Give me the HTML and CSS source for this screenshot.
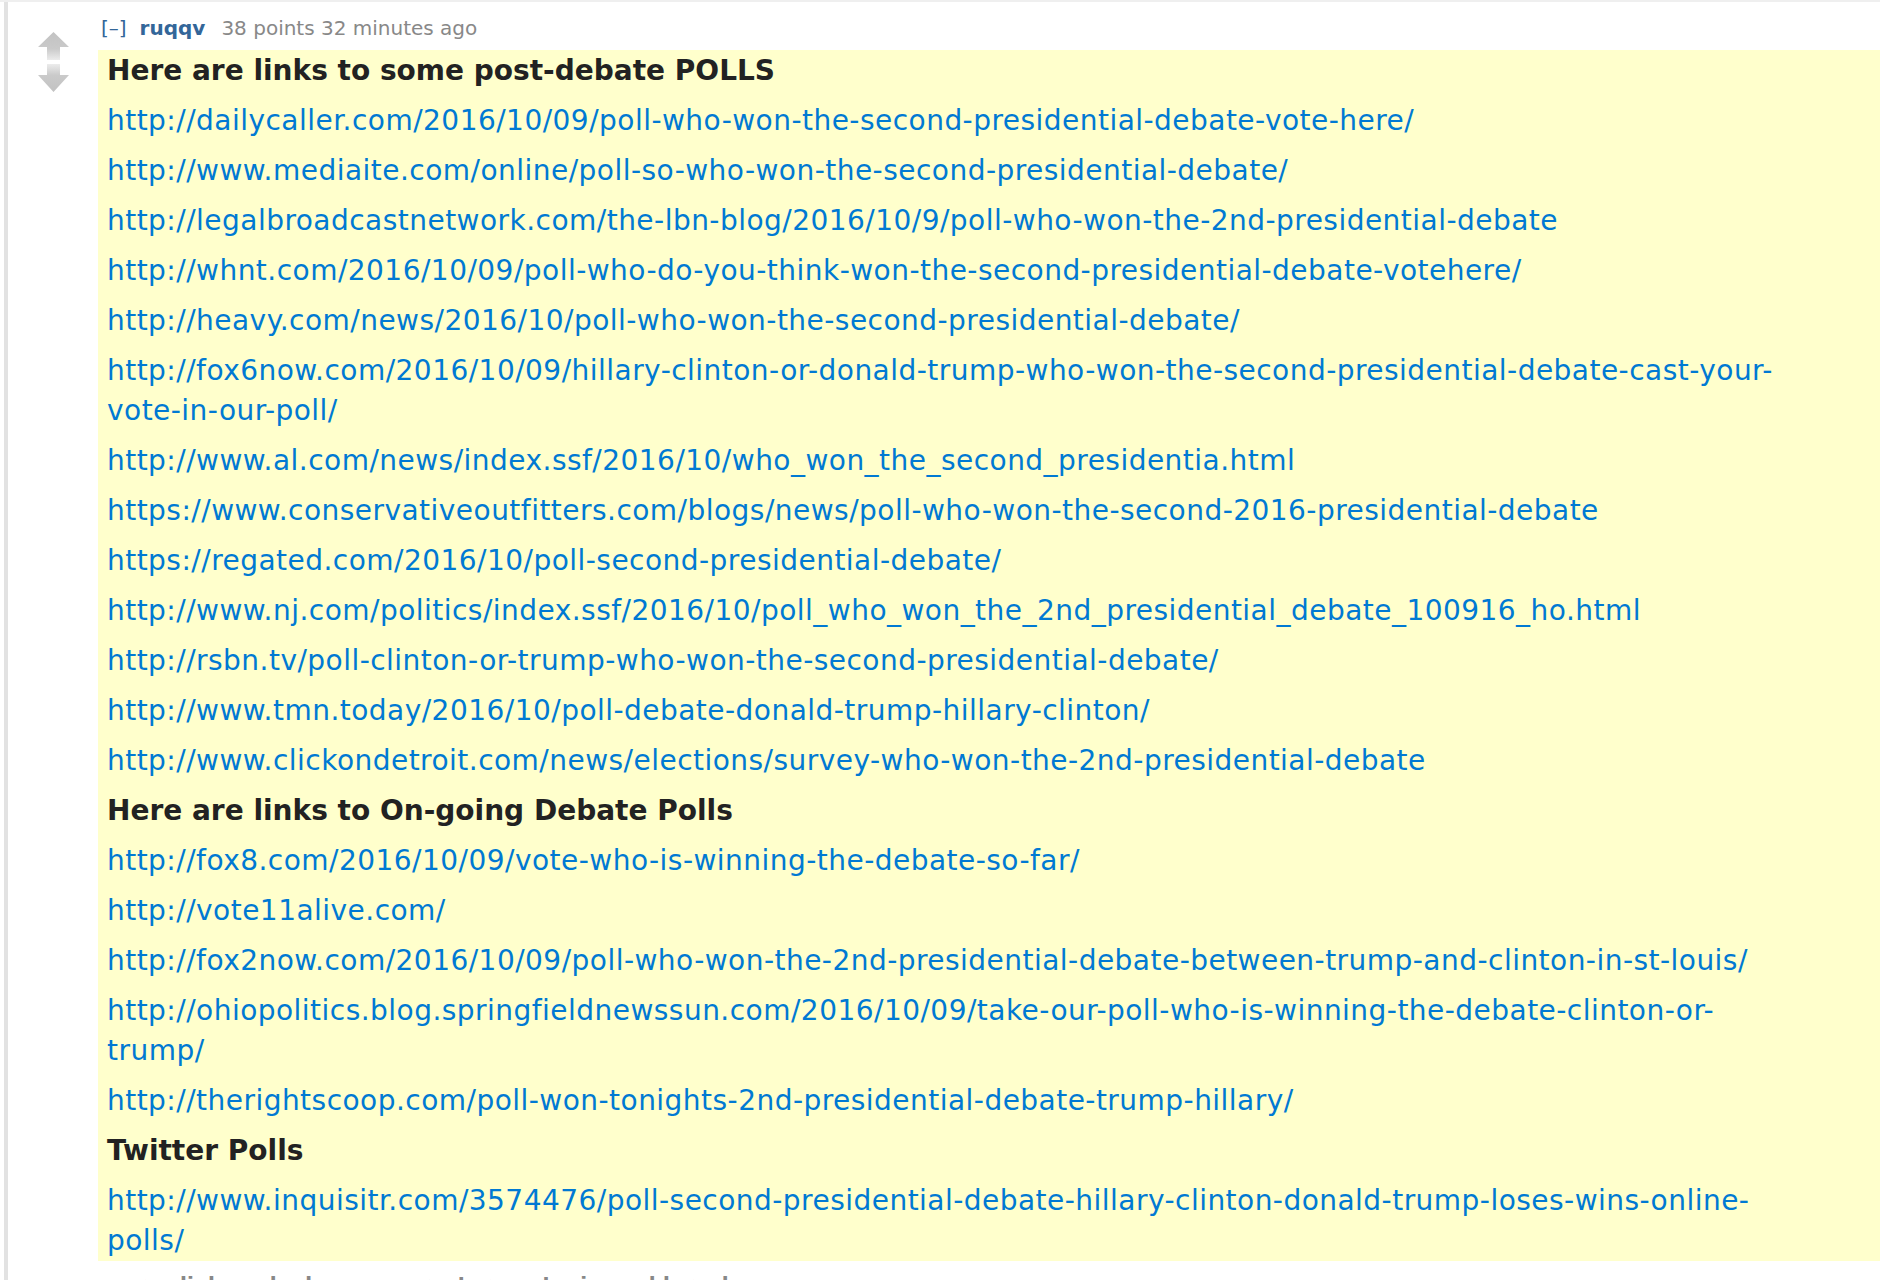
FILE: index.html
```html
<!DOCTYPE html>
<html>
<head>
<meta charset="utf-8">
<link rel="stylesheet" href="styles.css">
</head>
<body>
<div class="topbar"></div>
<div class="comment">
  <div class="votes">
    <svg class="arrow" width="31" height="28" viewBox="0 0 31 28">
      <defs>
        <linearGradient id="gu" x1="0" y1="0" x2="0" y2="1">
          <stop offset="0" stop-color="#c2c2c2"/>
          <stop offset="0.6" stop-color="#cacaca"/>
          <stop offset="1" stop-color="#ececec"/>
        </linearGradient>
      </defs>
      <path d="M15.5 0 L31 15 L22 15 L22 28 L9 28 L9 15 L0 15 Z" fill="url(#gu)"/>
    </svg>
    <svg class="arrow down" width="31" height="28" viewBox="0 0 31 28">
      <defs>
        <linearGradient id="gd" x1="0" y1="0" x2="0" y2="1">
          <stop offset="0" stop-color="#ececec"/>
          <stop offset="0.4" stop-color="#cacaca"/>
          <stop offset="1" stop-color="#c2c2c2"/>
        </linearGradient>
      </defs>
      <path d="M9 0 L22 0 L22 11 L31 11 L15.5 28 L0 11 L9 11 Z" fill="url(#gd)"/>
    </svg>
  </div>
  <div class="entry">
    <p class="tagline"><a class="expand">[–]</a><a class="author">ruqqv</a><span class="score">38 points 32 minutes ago</span></p>
    <div class="usertext">
      <div class="md">
        <p><strong>Here are links to some post-debate POLLS</strong></p>
        <p><a>http://dailycaller.com/2016/10/09/poll-who-won-the-second-presidential-debate-vote-here/</a></p>
        <p><a>http://www.mediaite.com/online/poll-so-who-won-the-second-presidential-debate/</a></p>
        <p><a>http://legalbroadcastnetwork.com/the-lbn-blog/2016/10/9/poll-who-won-the-2nd-presidential-debate</a></p>
        <p><a>http://whnt.com/2016/10/09/poll-who-do-you-think-won-the-second-presidential-debate-votehere/</a></p>
        <p><a>http://heavy.com/news/2016/10/poll-who-won-the-second-presidential-debate/</a></p>
        <p><a>http://fox6now.com/2016/10/09/hillary-clinton-or-donald-trump-who-won-the-second-presidential-debate-cast-your-vote-in-our-poll/</a></p>
        <p><a>http://www.al.com/news/index.ssf/2016/10/who_won_the_second_presidentia.html</a></p>
        <p><a>https://www.conservativeoutfitters.com/blogs/news/poll-who-won-the-second-2016-presidential-debate</a></p>
        <p><a>https://regated.com/2016/10/poll-second-presidential-debate/</a></p>
        <p><a>http://www.nj.com/politics/index.ssf/2016/10/poll_who_won_the_2nd_presidential_debate_100916_ho.html</a></p>
        <p><a>http://rsbn.tv/poll-clinton-or-trump-who-won-the-second-presidential-debate/</a></p>
        <p><a>http://www.tmn.today/2016/10/poll-debate-donald-trump-hillary-clinton/</a></p>
        <p><a>http://www.clickondetroit.com/news/elections/survey-who-won-the-2nd-presidential-debate</a></p>
        <p><strong>Here are links to On-going Debate Polls</strong></p>
        <p><a>http://fox8.com/2016/10/09/vote-who-is-winning-the-debate-so-far/</a></p>
        <p><a>http://vote11alive.com/</a></p>
        <p><a>http://fox2now.com/2016/10/09/poll-who-won-the-2nd-presidential-debate-between-trump-and-clinton-in-st-louis/</a></p>
        <p><a>http://ohiopolitics.blog.springfieldnewssun.com/2016/10/09/take-our-poll-who-is-winning-the-debate-clinton-or-trump/</a></p>
        <p><a>http://therightscoop.com/poll-won-tonights-2nd-presidential-debate-trump-hillary/</a></p>
        <p><strong>Twitter Polls</strong></p>
        <p><a>http://www.inquisitr.com/3574476/poll-second-presidential-debate-hillary-clinton-donald-trump-loses-wins-online-polls/</a></p>
      </div>
    </div>
    <ul class="buttons">
      <li>permalink</li>
      <li>embed</li>
      <li>save</li>
      <li>parent</li>
      <li>report</li>
      <li>give gold</li>
      <li>reply</li>
    </ul>
  </div>
</div>
</body>
</html>
```

FILE: styles.css
```css
html, body {
  margin: 0;
  padding: 0;
  background: #ffffff;
  font-family: Verdana, "DejaVu Sans", sans-serif;
  overflow: hidden;
}

.topbar {
  height: 2px;
  background: #efefef;
}

.comment {
  display: flex;
  margin-left: 4px;
  border-left: 4px solid #e2e2e2;
}

.votes {
  width: 90px;
  flex: none;
  display: flex;
  flex-direction: column;
  align-items: center;
  padding-top: 30px;
  gap: 4px;
}

.arrow {
  display: block;
}

.entry {
  flex: 1;
  min-width: 0;
}

.tagline {
  margin: 14px 0 10px 0;
  height: 24px;
  line-height: 24px;
  font-size: 20px;
  color: #888888;
  white-space: nowrap;
  padding-left: 3px;
}

.expand {
  color: #336699;
  margin-right: 13px;
}

.author {
  color: #336699;
  font-weight: bold;
  margin-right: 16px;
}

.score {
  color: #888888;
}

.usertext {
  background: #ffffcc;
  padding: 1px 0 0 9px;
}

.md {
  max-width: 1682px;
  font-size: 28px;
  line-height: 40px;
  letter-spacing: 0.47px;
  color: #222222;
}

.md p {
  margin: 0 0 10px 0;
}

.md p:last-child {
  margin-bottom: 0;
}

.md strong {
  font-weight: bold;
  letter-spacing: 0;
}

.md a {
  color: #0079d3;
  text-decoration: none;
}

.buttons {
  list-style: none;
  margin: 11px 0 0 0;
  padding: 0 0 0 10px;
  display: flex;
  gap: 14px;
  font-size: 20px;
  line-height: 24px;
  font-weight: bold;
  color: #888888;
}
```
